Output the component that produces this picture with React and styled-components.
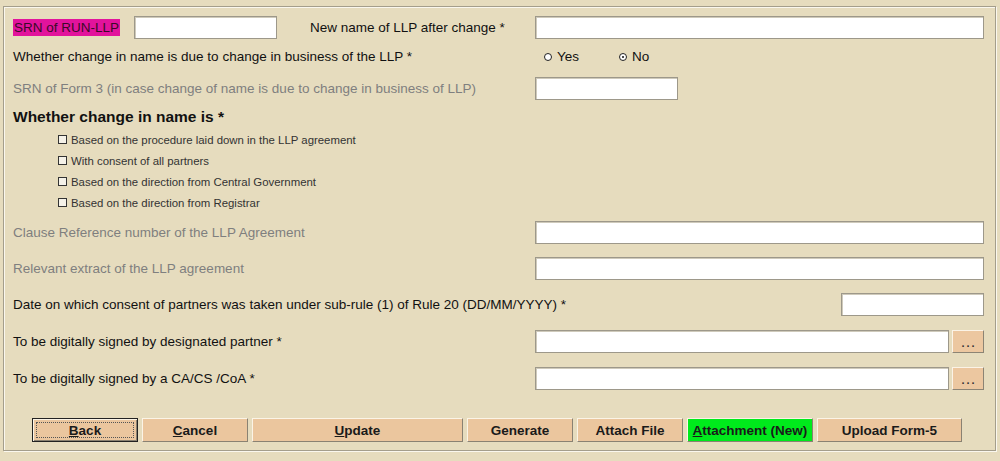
import React from "react";
import styled, { createGlobalStyle } from "styled-components";

const GlobalStyle = createGlobalStyle`
  html, body {
    margin: 0;
    padding: 0;
    background: #e6dcbe;
    font-family: "Liberation Sans", Arial, sans-serif;
  }
`;

const Page = styled.div`
  width: 1000px;
  height: 461px;
  padding: 6px 3px 0 3px;
  box-sizing: border-box;
  background: #e6dcbe;
`;

const Panel = styled.div`
  box-sizing: border-box;
  width: 993px;
  border: 1px solid #a49e8c;
  box-shadow: inset 1px 1px 0 #faf7ee, 1px 1px 0 #faf7ee;
  padding: 9px 11px 8px 8px;
  display: flex;
  flex-direction: column;
`;

const Row = styled.div`
  display: flex;
  align-items: center;
  height: ${(p) => p.$h || 23}px;
  margin-top: ${(p) => p.$mt || 0}px;
`;

const Label = styled.div`
  box-sizing: border-box;
  font-size: ${(p) => (p.$bold ? "15.5px" : "13.5px")};
  color: ${(p) => (p.$muted ? "#7f7f7f" : "#111")};
  font-weight: ${(p) => (p.$bold ? "bold" : "normal")};
  width: ${(p) => (p.$w ? p.$w + "px" : "auto")};
  padding-left: ${(p) => p.$pl || 0}px;
  white-space: nowrap;
`;

const Highlight = styled.span`
  background: #e2139c;
  color: #3a0a28;
  padding: 1px;
`;

const Field = styled.input`
  box-sizing: border-box;
  height: 23px;
  width: ${(p) => (p.$w ? p.$w + "px" : "auto")};
  flex: ${(p) => (p.$grow ? 1 : "none")};
  min-width: 0;
  background: #fff;
  border: 1px solid #9d988a;
  box-shadow: inset 1px 1px 0 #cfcabb;
  outline: none;
  padding: 0 4px;
  font-family: inherit;
`;

const Spacer = styled.div`
  flex: 1;
`;

const Radios = styled.div`
  display: flex;
  align-items: center;
  margin-left: 9px;
  gap: 40px;
`;

const RadioItem = styled.label`
  display: flex;
  align-items: center;
  gap: 5px;
  font-size: 13.5px;
  color: #111;
`;

const RadioDot = styled.span`
  box-sizing: border-box;
  width: 8px;
  height: 8px;
  border-radius: 50%;
  border: 1px solid #222;
  background: #fff;
  display: inline-flex;
  align-items: center;
  justify-content: center;

  &::after {
    content: "";
    width: 2px;
    height: 2px;
    border-radius: 50%;
    background: ${(p) => (p.$on ? "#111" : "transparent")};
  }
`;

const CheckList = styled.div`
  display: flex;
  flex-direction: column;
  margin-top: 3px;
`;

const CheckRow = styled.label`
  display: flex;
  align-items: center;
  height: 21px;
  padding-left: 46px;
  gap: 4px;
  font-size: 11.4px;
  color: #333;
`;

const CheckBox = styled.span`
  box-sizing: border-box;
  width: 9px;
  height: 9px;
  border: 1px solid #333;
  background: #f4f1e8;
`;

const Dots = styled.button`
  box-sizing: border-box;
  width: 32px;
  height: 23px;
  margin-left: 3px;
  background: #ecc7a0;
  border: 1px solid;
  border-color: #fbf3e6 #8c8474 #8c8474 #fbf3e6;
  font-size: 11px;
  font-weight: bold;
  letter-spacing: 2px;
  color: #333;
  padding: 3px 0 0 2px;
  font-family: inherit;
`;

const ButtonBar = styled.div`
  display: flex;
  gap: 4px;
  padding-left: 20px;
  margin-top: 28px;
  height: 24px;
`;

const Btn = styled.button`
  box-sizing: border-box;
  width: ${(p) => p.$w}px;
  height: 24px;
  background: ${(p) => (p.$green ? "#00ea1c" : "#ebc69e")};
  border: 1px solid;
  border-color: ${(p) =>
    p.$focus ? "#222 #222 #222 #222" : "#fbf4e6 #8a8272 #8a8272 #fbf4e6"};
  box-shadow: ${(p) =>
    p.$focus ? "inset 1px 1px 0 #fbf4e6, inset -1px -1px 0 #8a8272" : "none"};
  font-family: inherit;
  font-size: 13.5px;
  font-weight: bold;
  color: #1a1a1a;
  padding: 0;
  position: relative;

  u {
    text-decoration: underline;
    text-underline-offset: 1px;
  }
`;

const FocusRing = styled.span`
  position: absolute;
  inset: 3px;
  border: 1px dotted #555;
  pointer-events: none;
`;

export default function App() {
  return (
    <Page>
      <GlobalStyle />
      <Panel>
        <Row>
          <Label $w={122} $pl={1}>
            <Highlight>SRN of RUN-LLP</Highlight>
          </Label>
          <Field $w={143} />
          <Label $w={258} $pl={33}>
            New name of LLP after change *
          </Label>
          <Field $grow />
        </Row>

        <Row $mt={6}>
          <Label $w={523} $pl={1}>
            Whether change in name is due to change in business of the LLP *
          </Label>
          <Radios>
            <RadioItem>
              <RadioDot />
              Yes
            </RadioItem>
            <RadioItem>
              <RadioDot $on />
              No
            </RadioItem>
          </Radios>
        </Row>

        <Row $mt={9}>
          <Label $w={523} $pl={1} $muted>
            SRN of Form 3 (in case change of name is due to change in business of LLP)
          </Label>
          <Field $w={143} />
        </Row>

        <Row $mt={8} $h={18}>
          <Label $bold $pl={1}>Whether change in name is *</Label>
        </Row>

        <CheckList>
          <CheckRow>
            <CheckBox />
            Based on the procedure laid down in the LLP agreement
          </CheckRow>
          <CheckRow>
            <CheckBox />
            With consent of all partners
          </CheckRow>
          <CheckRow>
            <CheckBox />
            Based on the direction from Central Government
          </CheckRow>
          <CheckRow>
            <CheckBox />
            Based on the direction from Registrar
          </CheckRow>
        </CheckList>

        <Row $mt={8}>
          <Label $w={523} $pl={1} $muted>
            Clause Reference number of the LLP Agreement
          </Label>
          <Field $grow />
        </Row>

        <Row $mt={13}>
          <Label $w={523} $pl={1} $muted>
            Relevant extract of the LLP agreement
          </Label>
          <Field $grow />
        </Row>

        <Row $mt={13}>
          <Label $pl={1}>
            Date on which consent of partners was taken under sub-rule (1) of Rule 20 (DD/MM/YYYY) *
          </Label>
          <Spacer />
          <Field $w={143} />
        </Row>

        <Row $mt={14}>
          <Label $w={523} $pl={1}>To be digitally signed by designated partner *</Label>
          <Field $grow />
          <Dots>...</Dots>
        </Row>

        <Row $mt={14}>
          <Label $w={523} $pl={1}>To be digitally signed by a CA/CS /CoA *</Label>
          <Field $grow />
          <Dots>...</Dots>
        </Row>

        <ButtonBar>
          <Btn $w={106} $focus>
            <FocusRing />
            <u>B</u>ack
          </Btn>
          <Btn $w={106}>
            <u>C</u>ancel
          </Btn>
          <Btn $w={211}>
            <u>U</u>pdate
          </Btn>
          <Btn $w={106}>Generate</Btn>
          <Btn $w={106}>Attach File</Btn>
          <Btn $w={126} $green>
            <u>A</u>ttachment (New)
          </Btn>
          <Btn $w={145}>Upload Form-5</Btn>
        </ButtonBar>
      </Panel>
    </Page>
  );
}
